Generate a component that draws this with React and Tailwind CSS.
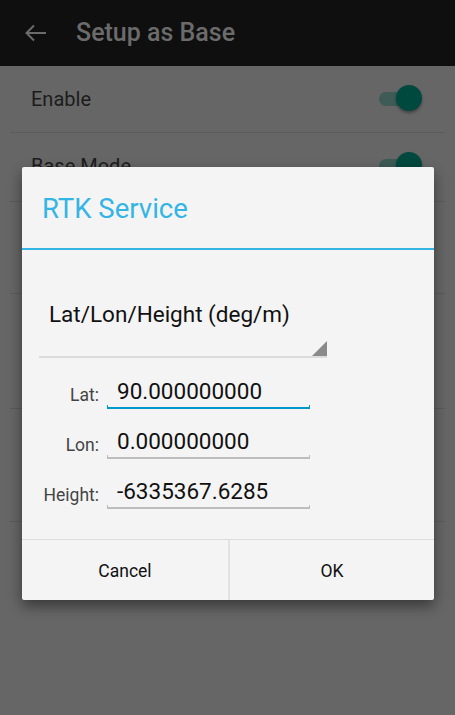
import React from 'react';

function Toggle() {
  return (
    <div className="relative w-[46px] h-[28px] flex items-center">
      <div className="ml-[3px] w-[42px] h-[14px] rounded-full bg-[#3e5b56]" />
      <div className="absolute right-0 top-0 w-[26px] h-[26px] rounded-full bg-[#00493f] shadow-[0_2px_3px_rgba(0,0,0,0.35)]" />
    </div>
  );
}

function Field({ label, value, active }) {
  const line = active ? 'border-[#0099cc]' : 'border-[#bdbdbd]';
  return (
    <div className="h-[50px] flex items-end">
      <div className="w-[77px] pb-[4px] text-right text-[17.5px] leading-[20px] text-[#444]">{label}</div>
      <div className="relative ml-[8px] w-[203px] pb-[6px] pl-[10px]">
        <div className="text-[22.5px] leading-[24px] text-[#111]">{value}</div>
        <div className={`absolute bottom-0 left-0 right-0 h-[4px] border-x border-b-2 ${line}`} />
      </div>
    </div>
  );
}

export default function App() {
  const rows = [
    { h: 'h-[67px]', label: 'Enable', toggle: true },
    { h: 'h-[69px]', label: 'Base Mode', toggle: true },
    { h: 'h-[92px]' },
    { h: 'h-[115px]' },
    { h: 'h-[113px]' },
  ];

  return (
    <div className="relative w-[455px] h-[715px] overflow-hidden bg-[#666666] font-['Roboto',sans-serif]">
      {/* toolbar */}
      <div className="h-[66px] bg-[#0f0f0f] flex items-center">
        <svg className="ml-[25px]" width="22" height="18" viewBox="0 0 22 18" fill="none" stroke="#6b6b6b" strokeWidth="2">
          <path d="M21 9H2M9 1.5L1.5 9L9 16.5" />
        </svg>
        <div className="ml-[29px] text-[25px] font-medium text-[#6b6b6b]">Setup as Base</div>
      </div>

      {/* dimmed settings list */}
      <div className="flex flex-col">
        {rows.map((r, i) => (
          <div key={i} className={`${r.h} mx-[10px] flex items-center justify-between border-b border-[#5b5b5b] ${i === 1 ? 'pb-[3px]' : ''}`}>
            <div className="pl-[21px] text-[20px] text-[#1c1c1c]">{r.label}</div>
            {r.toggle && <div className="mr-[23px]"><Toggle /></div>}
          </div>
        ))}
      </div>

      {/* dialog */}
      <div className="absolute left-[22px] top-[167px] w-[412px] h-[433px] bg-[#f4f4f4] rounded-[2px] shadow-[0_6px_14px_rgba(0,0,0,0.45)] flex flex-col">
        <div className="h-[81px] pl-[20px] pt-[26px] text-[27.5px] leading-[32px] text-[#33b5e5]">RTK Service</div>
        <div className="h-[2px] bg-[#33b5e5]" />

        <div className="relative mt-[49px] ml-[17px] w-[288px] h-[59px] border-b-2 border-[#dcdcdc] pl-[10px] pt-[1px]">
          <div className="text-[22.5px] leading-[28px] text-[#111]">Lat/Lon/Height (deg/m)</div>
          <div className="absolute right-0 bottom-0 w-0 h-0 border-l-[15px] border-l-transparent border-b-[15px] border-b-[#8a8a8a]" />
        </div>

        <div className="mt-[1px] flex flex-col">
          <Field label="Lat:" value="90.000000000" active />
          <Field label="Lon:" value="0.000000000" />
          <Field label="Height:" value="-6335367.6285" />
        </div>

        <div className="mt-auto h-[61px] border-t border-[#dcdcdc] flex">
          <div className="w-[206px] pt-[3px] flex items-center justify-center text-[17.5px] text-[#111]">Cancel</div>
          <div className="w-[2px] bg-[#e2e2e2]" />
          <div className="flex-1 pt-[3px] flex items-center justify-center text-[17.5px] text-[#111]">OK</div>
        </div>
      </div>
    </div>
  );
}
